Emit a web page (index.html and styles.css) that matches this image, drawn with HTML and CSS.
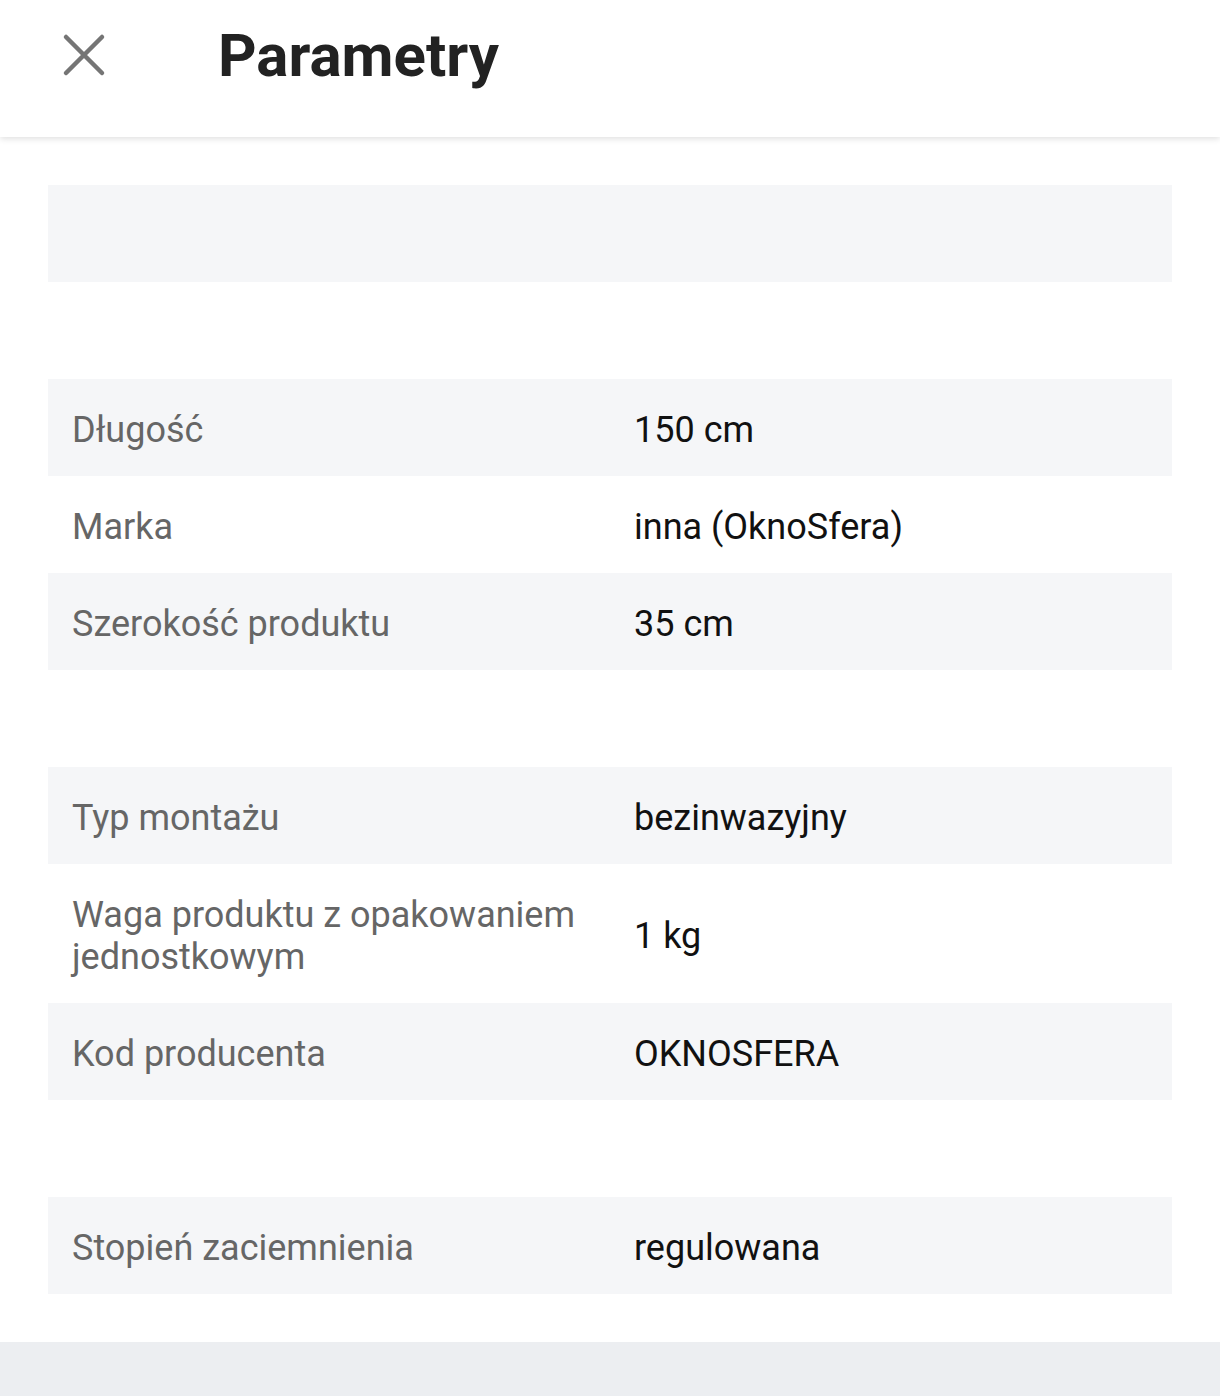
FILE: index.html
```html
<!DOCTYPE html>
<html lang="pl">
<head>
<meta charset="utf-8">
<title>Parametry</title>
<link rel="stylesheet" href="styles.css">
</head>
<body>
<div class="page">
  <header class="topbar">
    <button class="close" aria-label="Zamknij">
      <svg width="44" height="44" viewBox="0 0 44 44"><path d="M4 4 L40 40 M40 4 L4 40" stroke="#757575" stroke-width="4.5" stroke-linecap="round" fill="none"/></svg>
    </button>
    <h1 class="title">Parametry</h1>
  </header>
  <main class="content">
    <div class="params">
      <div class="row shade blank"><span class="label"></span><span class="value"></span></div>
      <div class="row blank"><span class="label"></span><span class="value"></span></div>
      <div class="row shade"><span class="label">Długość</span><span class="value">150 cm</span></div>
      <div class="row"><span class="label">Marka</span><span class="value">inna (OknoSfera)</span></div>
      <div class="row shade"><span class="label">Szerokość produktu</span><span class="value">35 cm</span></div>
      <div class="row blank"><span class="label"></span><span class="value"></span></div>
      <div class="row shade"><span class="label">Typ montażu</span><span class="value">bezinwazyjny</span></div>
      <div class="row"><span class="label">Waga produktu z opakowaniem jednostkowym</span><span class="value">1 kg</span></div>
      <div class="row shade"><span class="label">Kod producenta</span><span class="value">OKNOSFERA</span></div>
      <div class="row blank"><span class="label"></span><span class="value"></span></div>
      <div class="row shade"><span class="label">Stopień zaciemnienia</span><span class="value">regulowana</span></div>
    </div>
  </main>
  <footer class="bottom"></footer>
</div>
</body>
</html>
```
FILE: styles.css
```css
* { box-sizing: border-box; }
html, body { margin: 0; padding: 0; background: #fff; }
body { font-family: Roboto, "Noto Sans", sans-serif; }
.page { width: 1220px; min-height: 1396px; display: flex; flex-direction: column; }
.topbar {
  height: 137px;
  display: flex;
  align-items: center;
  background: #fff;
  box-shadow: 0 2px 6px rgba(0,0,0,0.12);
  position: relative;
  z-index: 1;
}
.close {
  margin-left: 62px;
  width: 44px; height: 44px;
  padding: 0; border: 0; background: none;
  display: flex;
  margin-top: -28px;
}
.title {
  margin: 0 0 0 112px;
  font-size: 60px;
  font-weight: 700;
  color: #222;
  letter-spacing: 0;
  margin-top: -26px;
}
.content { padding: 48px 48px 48px; flex: 1; }
.params { display: flex; flex-direction: column; }
.row {
  display: grid;
  grid-template-columns: 562px 1fr;
  align-items: center;
  min-height: 97px;
  padding: 30px 24px 25px;
  font-size: 36px;
  line-height: 42px;
  background: #fff;
}
.row.shade { background: #f5f6f8; }
.label { color: #666; padding-right: 20px; }
.value { color: #111; }
.bottom { height: 54px; background: #eceef1; }
```
